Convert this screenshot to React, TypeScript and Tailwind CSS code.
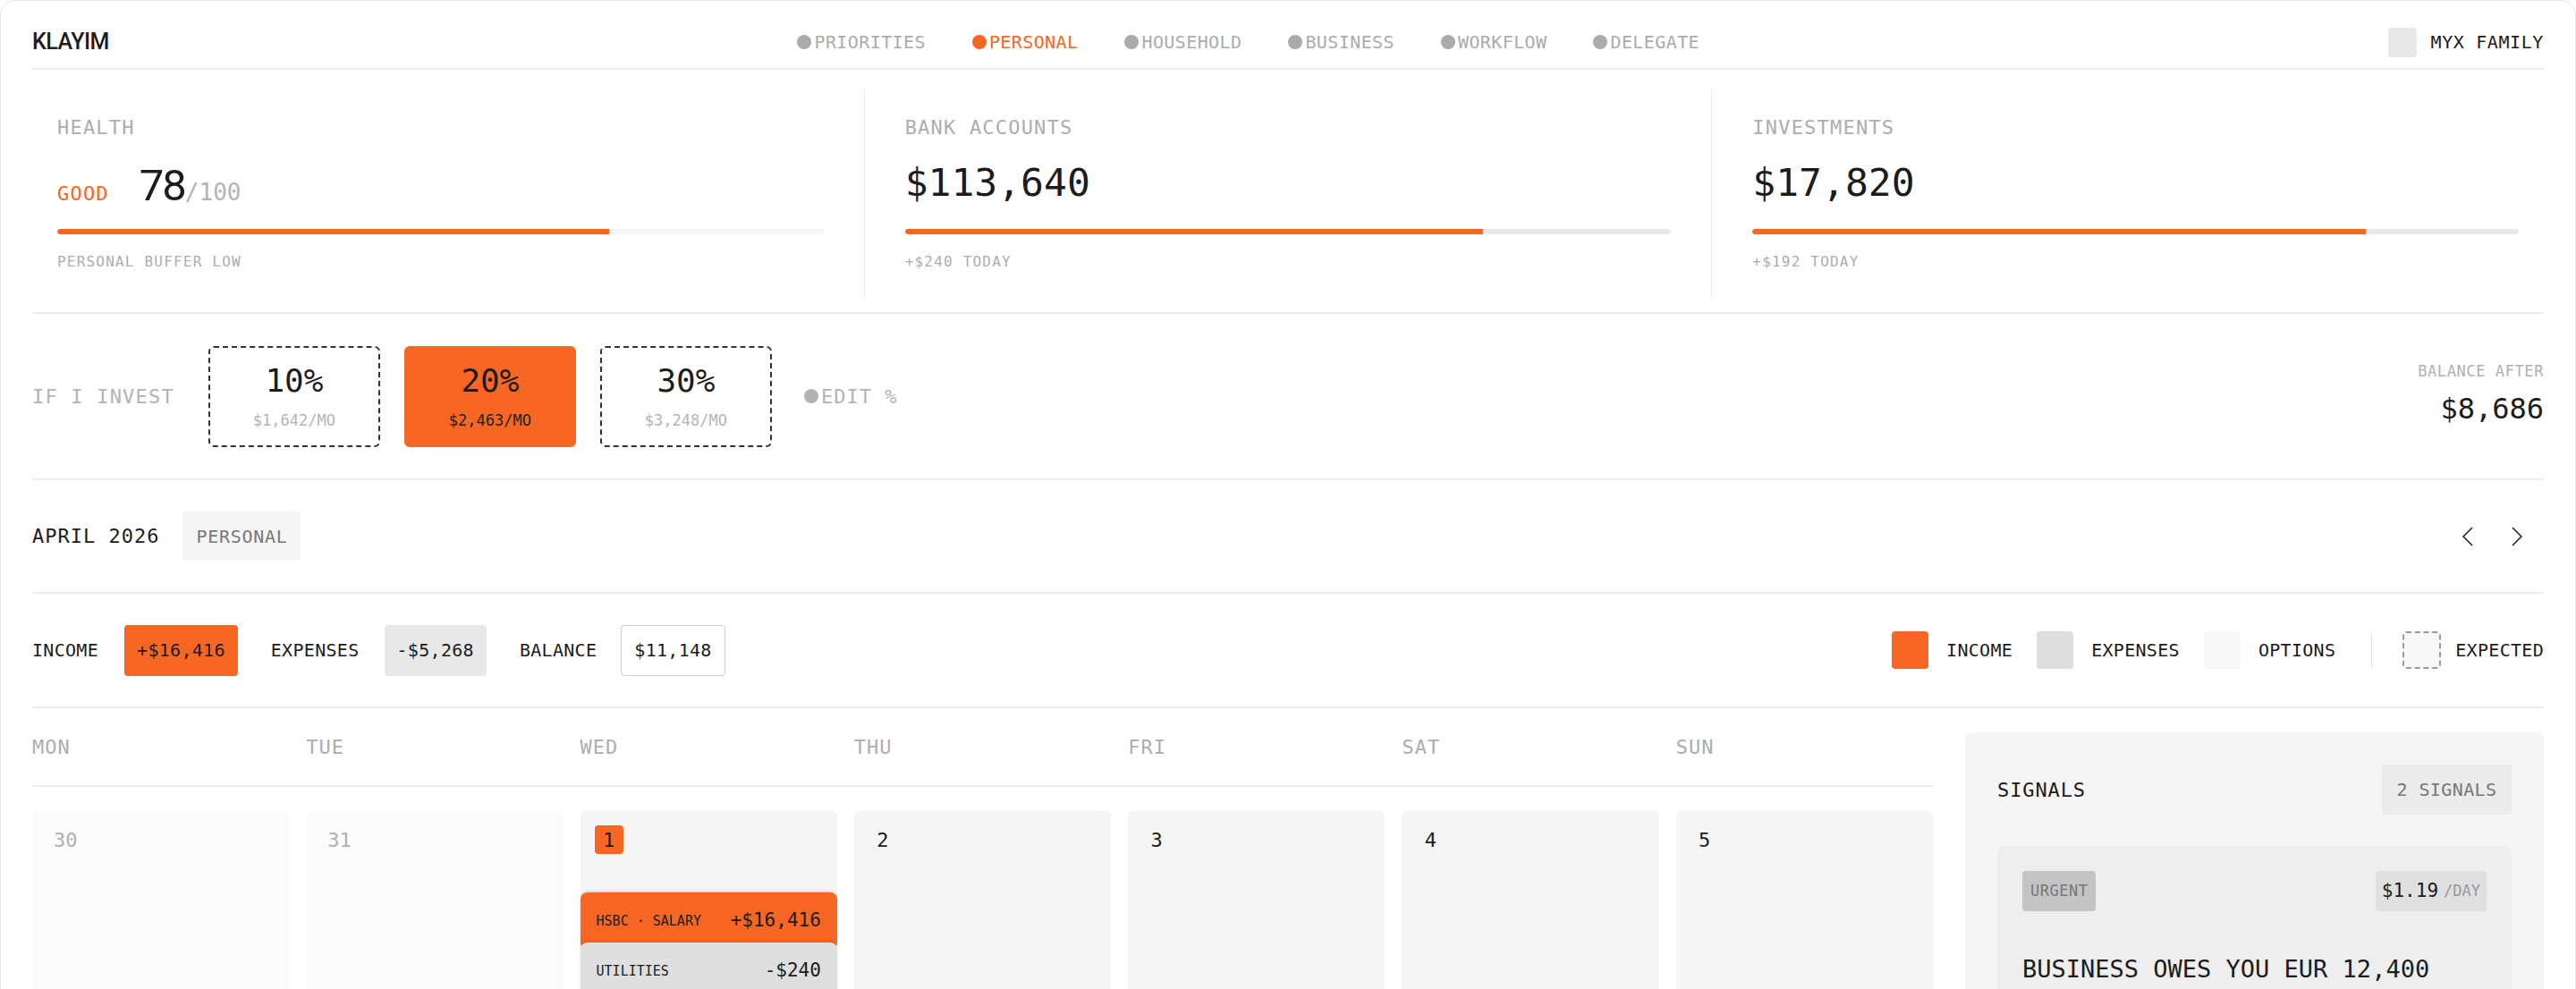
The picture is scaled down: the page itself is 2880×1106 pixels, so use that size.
const tabs = ["PRIORITIES", "PERSONAL", "HOUSEHOLD", "BUSINESS", "WORKFLOW", "DELEGATE"]

const days = [
  { n: "30", muted: true },
  { n: "31", muted: true },
  { n: "1", today: true },
  { n: "2" },
  { n: "3" },
  { n: "4" },
  { n: "5" },
]

function Bar({ pct, track }: { pct: number; track: string }) {
  return (
    <div className={`mt-[25px] h-[6px] rounded-full overflow-hidden ${track}`}>
      <div className="h-full rounded-l-full bg-[#f86624]" style={{ width: `${pct}%` }} />
    </div>
  )
}

function Chevron({ dir }: { dir: "left" | "right" }) {
  return (
    <button className="w-[40px] h-[40px] flex items-center justify-center">
      <svg width="12" height="22" viewBox="0 0 12 22" fill="none" stroke="#1c1c1c" strokeWidth="1.5">
        {dir === "left" ? <polyline points="11,1 1,11 11,21" /> : <polyline points="1,1 11,11 1,21" />}
      </svg>
    </button>
  )
}

export default function App() {
  return (
    <div className="min-h-screen bg-white text-[#1c1c1c] [font-family:'DejaVu_Sans_Mono',monospace]">
      <div className="border border-[#e6e6e6] rounded-2xl px-[35px] min-h-[1300px]">
        {/* top bar */}
        <header className="flex items-center justify-between h-[77px] pt-[17px] border-b-2 border-[#ececec]">
          <div className="[font-family:Roboto,sans-serif] text-[25px] font-medium tracking-[-0.5px]">KLAYIM</div>
          <nav className="flex items-center gap-[52px] text-[20px] tracking-[0.4px] text-[#ababab]">
            {tabs.map((t) => (
              <span key={t} className={`flex items-center gap-[3px] ${t === "PERSONAL" ? "text-[#f86624]" : ""}`}>
                <span className="w-4 h-4 rounded-full bg-current" />
                {t}
              </span>
            ))}
          </nav>
          <div className="flex items-center gap-4 text-[20px] tracking-[0.6px]">
            <span className="w-8 h-[33px] rounded bg-[#e8e8e8]" />
            MYX FAMILY
          </div>
        </header>

        {/* stats */}
        <section className="flex px-[28px] pt-[21px] pb-[17px] border-b-2 border-[#ececec]">
          <div className="flex-1 py-[27px]">
            <div className="text-[22px] leading-[33px] tracking-[1.2px] text-[#adadad]">HEALTH</div>
            <div className="mt-[24px] h-[48px] flex items-baseline leading-none">
              <span className="text-[22px] tracking-[1.2px] text-[#f86624]">GOOD</span>
              <span className="ml-[34px] [font-family:Roboto,sans-serif] text-[49px] tracking-[-2px]">78</span>
              <span className="text-[26px] text-[#b3b3b3]">/100</span>
            </div>
            <Bar pct={72} track="bg-[#f5f5f5]" />
            <div className="mt-[19px] text-[16px] leading-[24px] tracking-[1.2px] text-[#adadad]">PERSONAL BUFFER LOW</div>
          </div>
          <div className="w-px bg-[#ebebeb] mx-[45px]" />
          <div className="flex-1 py-[27px]">
            <div className="text-[22px] leading-[33px] tracking-[1.2px] text-[#adadad]">BANK ACCOUNTS</div>
            <div className="mt-[24px] h-[48px] flex items-baseline leading-none">
              <span className="text-[43px]">$113,640</span>
            </div>
            <Bar pct={75.4} track="bg-[#e9e9e9]" />
            <div className="mt-[19px] text-[16px] leading-[24px] tracking-[1.2px] text-[#adadad]">+$240 TODAY</div>
          </div>
          <div className="w-px bg-[#ebebeb] mx-[45px]" />
          <div className="flex-1 py-[27px]">
            <div className="text-[22px] leading-[33px] tracking-[1.2px] text-[#adadad]">INVESTMENTS</div>
            <div className="mt-[24px] h-[48px] flex items-baseline leading-none">
              <span className="text-[43px]">$17,820</span>
            </div>
            <Bar pct={80} track="bg-[#e9e9e9]" />
            <div className="mt-[19px] text-[16px] leading-[24px] tracking-[1.2px] text-[#adadad]">+$192 TODAY</div>
          </div>
        </section>

        {/* invest options */}
        <section className="flex items-center h-[186px] border-b-2 border-[#ececec]">
          <span className="mr-[38px] text-[22px] tracking-[1.2px] text-[#b3b3b3]">IF I INVEST</span>
          <div className="flex gap-[27px]">
            <div className="w-[192px] h-[113px] rounded-md border-2 border-dashed border-[#333] flex flex-col items-center justify-center gap-[18px] leading-none">
              <span className="text-[36px]">10%</span>
              <span className="text-[17px] text-[#b5b5b5]">$1,642/MO</span>
            </div>
            <div className="w-[192px] h-[113px] rounded-md bg-[#f86624] flex flex-col items-center justify-center gap-[18px] leading-none">
              <span className="text-[36px]">20%</span>
              <span className="text-[17px] text-[#222]">$2,463/MO</span>
            </div>
            <div className="w-[192px] h-[113px] rounded-md border-2 border-dashed border-[#333] flex flex-col items-center justify-center gap-[18px] leading-none">
              <span className="text-[36px]">30%</span>
              <span className="text-[17px] text-[#b5b5b5]">$3,248/MO</span>
            </div>
          </div>
          <span className="ml-[36px] flex items-center gap-[3px] text-[22px] tracking-[1px] text-[#b3b3b3]">
            <span className="w-4 h-4 rounded-full bg-current" />
            EDIT %
          </span>
          <div className="ml-auto text-right pb-[10px]">
            <div className="text-[17px] leading-[24px] tracking-[0.6px] text-[#b0b0b0]">BALANCE AFTER</div>
            <div className="mt-[14px] text-[32px] leading-none">$8,686</div>
          </div>
        </section>

        {/* month */}
        <section className="flex items-center h-[127px] border-b-2 border-[#ececec]">
          <span className="text-[22px] tracking-[1px]">APRIL 2026</span>
          <span className="ml-[26px] h-[55px] px-[15px] flex items-center rounded bg-[#f5f5f5] text-[20px] tracking-[0.7px] text-[#777]">
            PERSONAL
          </span>
          <div className="ml-auto mr-[10px] flex gap-[15px]">
            <Chevron dir="left" />
            <Chevron dir="right" />
          </div>
        </section>

        {/* totals + legend */}
        <section className="flex items-center h-[128px] border-b-2 border-[#ececec] text-[20px] tracking-[0.3px]">
          <span>INCOME</span>
          <span className="ml-[29px] h-[57px] px-[14px] flex items-center rounded bg-[#f86624]">+$16,416</span>
          <span className="ml-[37px]">EXPENSES</span>
          <span className="ml-[28px] h-[57px] px-[14px] flex items-center rounded bg-[#e8e8e8]">-$5,268</span>
          <span className="ml-[37px]">BALANCE</span>
          <span className="ml-[27px] h-[57px] px-[14px] flex items-center rounded border border-[#cfcfcf]">$11,148</span>

          <div className="ml-auto flex items-center">
            <span className="w-[41px] h-[42px] rounded bg-[#f86624]" />
            <span className="ml-[20px]">INCOME</span>
            <span className="ml-[27px] w-[41px] h-[42px] rounded bg-[#dedede]" />
            <span className="ml-[20px]">EXPENSES</span>
            <span className="ml-[27px] w-[41px] h-[42px] rounded bg-[#f8f8f8]" />
            <span className="ml-[20px]">OPTIONS</span>
            <span className="ml-[40px] w-px h-[41px] bg-[#e6e6e6]" />
            <span className="ml-[34px] w-[43px] h-[42px] rounded border-2 border-dashed border-[#9a9a9a] bg-[#f8f8f8]" />
            <span className="ml-[16px]">EXPECTED</span>
          </div>
        </section>

        {/* calendar + signals */}
        <section className="flex gap-[36px] pt-[27px]">
          <div className="flex-1">
            <div className="grid grid-cols-7 gap-[19px] h-[61px] border-b-2 border-[#ececec] text-[22px] leading-[33px] tracking-[1px] text-[#adadad]">
              {["MON", "TUE", "WED", "THU", "FRI", "SAT", "SUN"].map((d) => (
                <span key={d}>{d}</span>
              ))}
            </div>
            <div className="mt-[27px] grid grid-cols-7 gap-[19px]">
              {days.map((d) => (
                <div
                  key={d.n}
                  className={`h-[320px] rounded-md p-4 flex flex-col ${d.muted ? "bg-[#fbfbfb]" : "bg-[#f5f5f5]"}`}
                >
                  <span
                    className={`self-start h-[32px] min-w-[32px] px-2 flex items-center justify-center rounded text-[22px] ${
                      d.muted ? "text-[#b0b0b0]" : ""
                    } ${d.today ? "bg-[#f86624]" : ""}`}
                  >
                    {d.n}
                  </span>
                  {d.today && (
                    <div className="-mx-4 mt-[43px]">
                      <div className="h-[64px] px-[18px] flex items-center justify-between rounded-lg bg-[#f86624] shadow-[0_-1px_3px_rgba(0,0,0,0.18)]">
                        <span className="text-[15px]">HSBC · SALARY</span>
                        <span className="text-[21px]">+$16,416</span>
                      </div>
                      <div className="-mt-[8px] h-[64px] px-[18px] flex items-center justify-between rounded-lg bg-[#dfdfdf] shadow-[0_-1px_3px_rgba(0,0,0,0.12)]">
                        <span className="text-[15px]">UTILITIES</span>
                        <span className="text-[21px]">-$240</span>
                      </div>
                    </div>
                  )}
                </div>
              ))}
            </div>
          </div>

          <aside className="w-[647px] rounded-lg bg-[#f5f5f5] p-9">
            <div className="flex items-center justify-between">
              <span className="text-[22px] tracking-[0.9px]">SIGNALS</span>
              <span className="h-[56px] w-[145px] flex items-center justify-center rounded bg-[#ebebeb] text-[20px] tracking-[0.4px] text-[#777]">
                2 SIGNALS
              </span>
            </div>
            <div className="mt-[35px] rounded-lg bg-[#eeeeee] p-7 h-[300px]">
              <div className="flex items-center justify-between">
                <span className="h-[45px] px-[9px] flex items-center rounded bg-[#c4c4c4] text-[17px] tracking-[0.5px] text-[#777]">
                  URGENT
                </span>
                <span className="h-[45px] px-[7px] flex items-center gap-[6px] rounded bg-[#e0e0e0]">
                  <span className="text-[21px]">$1.19</span>
                  <span className="text-[17px] text-[#999]">/DAY</span>
                </span>
              </div>
              <div className="mt-[45px] text-[27px] font-medium">BUSINESS OWES YOU EUR 12,400</div>
            </div>
          </aside>
        </section>
      </div>
    </div>
  )
}
